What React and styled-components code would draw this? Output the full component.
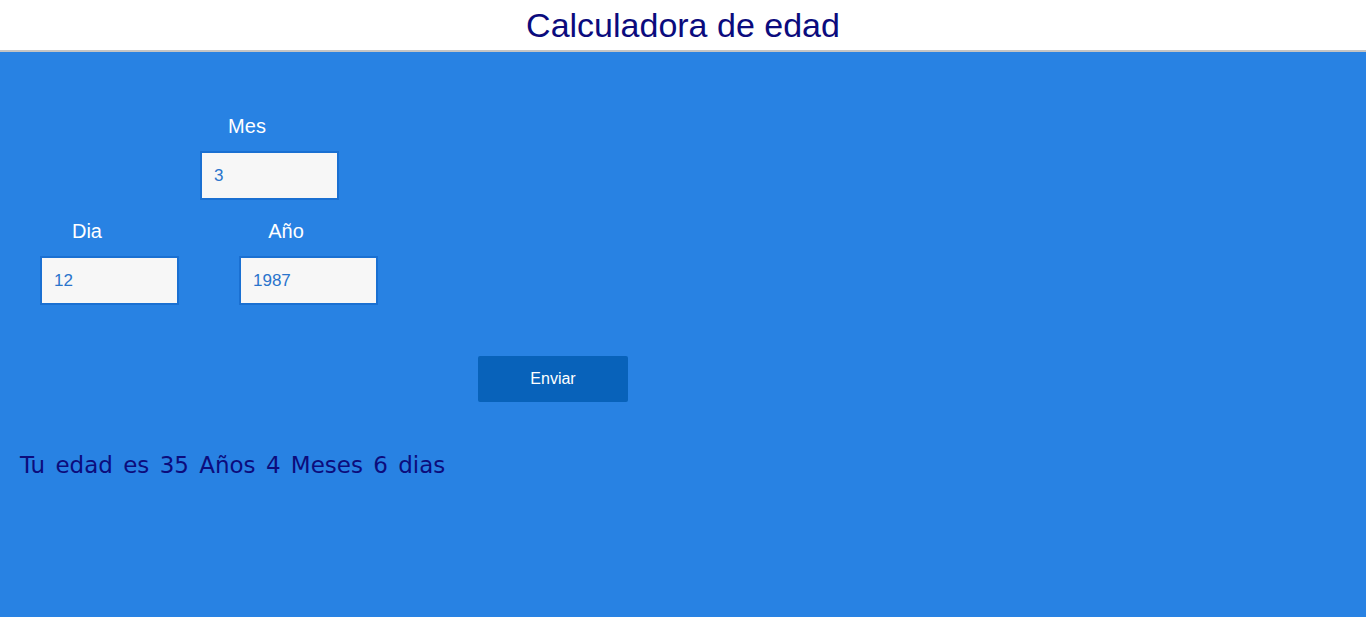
import React, { useState } from "react";
import styled, { createGlobalStyle } from "styled-components";

const GlobalStyle = createGlobalStyle`
  html, body {
    margin: 0;
    padding: 0;
    background: #2882e3;
    font-family: "Liberation Sans", Arial, sans-serif;
  }
`;

const Header = styled.header`
  height: 50px;
  background: #fff;
  border-bottom: 2px solid #c4c4c4;
  display: flex;
  align-items: center;
  justify-content: center;
`;

const Title = styled.h1`
  margin: 0;
  font-weight: normal;
  font-size: 34px;
  color: #0b0b7d;
  line-height: 50px;
`;

const Main = styled.main`
  background: #2882e3;
  min-height: 565px;
  padding-top: 61px;
  box-sizing: border-box;
`;

const Row = styled.div`
  display: flex;
  align-items: flex-start;
  gap: ${(p) => p.gap || 0}px;
  padding-left: ${(p) => p.left || 0}px;
  margin-bottom: ${(p) => p.bottom || 0}px;
`;

const Field = styled.div`
  display: flex;
  flex-direction: column;
  align-items: flex-start;
  gap: 13px;
`;

const Label = styled.label`
  display: block;
  width: 94px;
  padding-top: 1px;
  text-align: center;
  color: #fff;
  font-size: 20px;
  line-height: 24px;
`;

const Input = styled.input`
  width: 139px;
  height: 49px;
  flex-shrink: 0;
  box-sizing: border-box;
  border: 2px solid #1a70d2;
  background: #f7f7f7;
  padding: 0 12px;
  font-family: "Liberation Sans", Arial, sans-serif;
  font-size: 17px;
  color: #2a74cc;
  outline: none;
`;

const Button = styled.button`
  display: block;
  width: 150px;
  height: 46px;
  margin: 51px 0 0 478px;
  border: none;
  border-radius: 2px;
  background: #0862ba;
  color: #fff;
  font-family: "Liberation Sans", Arial, sans-serif;
  font-size: 16px;
  cursor: pointer;
`;

const Result = styled.p`
  margin: 49px 0 0 20px;
  font-family: Verdana, "DejaVu Sans", sans-serif;
  font-size: 23px;
  line-height: 28px;
  word-spacing: 3px;
  color: #0c0c7c;
`;

export default function App() {
  const [dia, setDia] = useState("12");
  const [mes, setMes] = useState("3");
  const [anio, setAnio] = useState("1987");

  return (
    <>
      <GlobalStyle />
      <Header>
        <Title>Calculadora de edad</Title>
      </Header>
      <Main>
        <Row left={200} bottom={18}>
          <Field>
            <Label>Mes</Label>
            <Input value={mes} onChange={(e) => setMes(e.target.value)} />
          </Field>
        </Row>
        <Row left={40} gap={60}>
          <Field>
            <Label>Dia</Label>
            <Input value={dia} onChange={(e) => setDia(e.target.value)} />
          </Field>
          <Field>
            <Label>Año</Label>
            <Input value={anio} onChange={(e) => setAnio(e.target.value)} />
          </Field>
        </Row>
        <Button>Enviar</Button>
        <Result>Tu edad es 35 Años 4 Meses 6 dias</Result>
      </Main>
    </>
  );
}
